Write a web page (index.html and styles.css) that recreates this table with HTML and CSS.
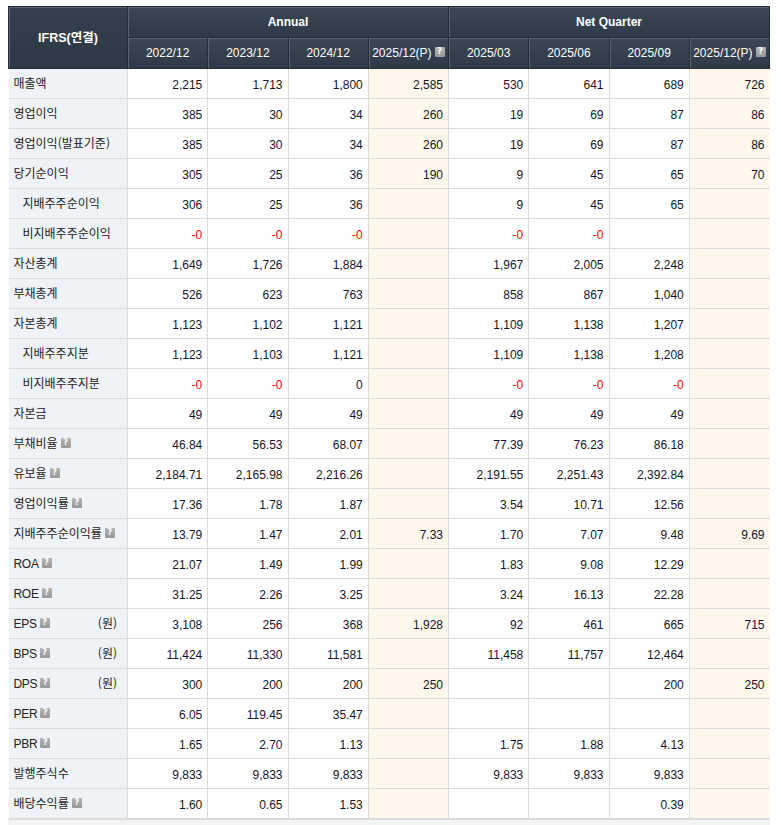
FILE: index.html
```html
<!DOCTYPE html>
<html lang="ko">
<head>
<meta charset="utf-8">
<title>IFRS</title>
<link rel="stylesheet" href="styles.css">
</head>
<body>
<div class="wrap">
<table class="fin">
<colgroup>
<col class="c-label"><col><col><col><col><col><col><col><col>
</colgroup>
<thead>
<tr>
<th rowspan="2" class="h-ifrs">IFRS(연결)</th>
<th colspan="4" class="h-group">Annual</th>
<th colspan="4" class="h-group">Net Quarter</th>
</tr>
<tr>
<th>2022/12</th><th>2023/12</th><th>2024/12</th><th>2025/12(P)<i class="q"></i></th>
<th>2025/03</th><th>2025/06</th><th>2025/09</th><th>2025/12(P)<i class="q"></i></th>
</tr>
</thead>
<tbody>
<tr><th>매출액</th><td>2,215</td><td>1,713</td><td>1,800</td><td class="est">2,585</td><td>530</td><td>641</td><td>689</td><td class="est">726</td></tr>
<tr><th>영업이익</th><td>385</td><td>30</td><td>34</td><td class="est">260</td><td>19</td><td>69</td><td>87</td><td class="est">86</td></tr>
<tr><th>영업이익(발표기준)</th><td>385</td><td>30</td><td>34</td><td class="est">260</td><td>19</td><td>69</td><td>87</td><td class="est">86</td></tr>
<tr><th>당기순이익</th><td>305</td><td>25</td><td>36</td><td class="est">190</td><td>9</td><td>45</td><td>65</td><td class="est">70</td></tr>
<tr><th class="sub">지배주주순이익</th><td>306</td><td>25</td><td>36</td><td class="est"></td><td>9</td><td>45</td><td>65</td><td class="est"></td></tr>
<tr><th class="sub">비지배주주순이익</th><td class="neg">-0</td><td class="neg">-0</td><td class="neg">-0</td><td class="est"></td><td class="neg">-0</td><td class="neg">-0</td><td></td><td class="est"></td></tr>
<tr><th>자산총계</th><td>1,649</td><td>1,726</td><td>1,884</td><td class="est"></td><td>1,967</td><td>2,005</td><td>2,248</td><td class="est"></td></tr>
<tr><th>부채총계</th><td>526</td><td>623</td><td>763</td><td class="est"></td><td>858</td><td>867</td><td>1,040</td><td class="est"></td></tr>
<tr><th>자본총계</th><td>1,123</td><td>1,102</td><td>1,121</td><td class="est"></td><td>1,109</td><td>1,138</td><td>1,207</td><td class="est"></td></tr>
<tr><th class="sub">지배주주지분</th><td>1,123</td><td>1,103</td><td>1,121</td><td class="est"></td><td>1,109</td><td>1,138</td><td>1,208</td><td class="est"></td></tr>
<tr><th class="sub">비지배주주지분</th><td class="neg">-0</td><td class="neg">-0</td><td>0</td><td class="est"></td><td class="neg">-0</td><td class="neg">-0</td><td class="neg">-0</td><td class="est"></td></tr>
<tr><th>자본금</th><td>49</td><td>49</td><td>49</td><td class="est"></td><td>49</td><td>49</td><td>49</td><td class="est"></td></tr>
<tr><th>부채비율<i class="q"></i></th><td>46.84</td><td>56.53</td><td>68.07</td><td class="est"></td><td>77.39</td><td>76.23</td><td>86.18</td><td class="est"></td></tr>
<tr><th>유보율<i class="q"></i></th><td>2,184.71</td><td>2,165.98</td><td>2,216.26</td><td class="est"></td><td>2,191.55</td><td>2,251.43</td><td>2,392.84</td><td class="est"></td></tr>
<tr><th>영업이익률<i class="q"></i></th><td>17.36</td><td>1.78</td><td>1.87</td><td class="est"></td><td>3.54</td><td>10.71</td><td>12.56</td><td class="est"></td></tr>
<tr><th>지배주주순이익률<i class="q"></i></th><td>13.79</td><td>1.47</td><td>2.01</td><td class="est">7.33</td><td>1.70</td><td>7.07</td><td>9.48</td><td class="est">9.69</td></tr>
<tr><th><span class="en">ROA</span><i class="q"></i></th><td>21.07</td><td>1.49</td><td>1.99</td><td class="est"></td><td>1.83</td><td>9.08</td><td>12.29</td><td class="est"></td></tr>
<tr><th><span class="en">ROE</span><i class="q"></i></th><td>31.25</td><td>2.26</td><td>3.25</td><td class="est"></td><td>3.24</td><td>16.13</td><td>22.28</td><td class="est"></td></tr>
<tr><th><span class="en">EPS</span><i class="q"></i><span class="unit">(원)</span></th><td>3,108</td><td>256</td><td>368</td><td class="est">1,928</td><td>92</td><td>461</td><td>665</td><td class="est">715</td></tr>
<tr><th><span class="en">BPS</span><i class="q"></i><span class="unit">(원)</span></th><td>11,424</td><td>11,330</td><td>11,581</td><td class="est"></td><td>11,458</td><td>11,757</td><td>12,464</td><td class="est"></td></tr>
<tr><th><span class="en">DPS</span><i class="q"></i><span class="unit">(원)</span></th><td>300</td><td>200</td><td>200</td><td class="est">250</td><td></td><td></td><td>200</td><td class="est">250</td></tr>
<tr><th><span class="en">PER</span><i class="q"></i></th><td>6.05</td><td>119.45</td><td>35.47</td><td class="est"></td><td></td><td></td><td></td><td class="est"></td></tr>
<tr><th><span class="en">PBR</span><i class="q"></i></th><td>1.65</td><td>2.70</td><td>1.13</td><td class="est"></td><td>1.75</td><td>1.88</td><td>4.13</td><td class="est"></td></tr>
<tr><th>발행주식수</th><td>9,833</td><td>9,833</td><td>9,833</td><td class="est"></td><td>9,833</td><td>9,833</td><td>9,833</td><td class="est"></td></tr>
<tr><th>배당수익률<i class="q"></i></th><td>1.60</td><td>0.65</td><td>1.53</td><td class="est"></td><td></td><td></td><td>0.39</td><td class="est"></td></tr>
</tbody>
</table>
<div class="foot"></div>
</div>
</body>
</html>
```
FILE: styles.css
```css
html, body {
  margin: 0;
  padding: 0;
  background: #fff;
}
.wrap {
  padding: 6px 0 0 8px;
  width: 762px;
}
.fin {
  width: 762px;
  table-layout: fixed;
  border-collapse: collapse;
  font-family: "Liberation Sans", Tahoma, "Noto Sans CJK KR", sans-serif;
  font-size: 12px;
  line-height: 14px;
  color: #222;
}
.fin col.c-label { width: 119px; }
.fin thead th {
  height: 30px;
  padding: 0;
  color: #fff;
  font-weight: normal;
  text-align: center;
  background: linear-gradient(#3b4755, #2e3a47);
  border: 1px solid #232d37;
  box-shadow: inset 1px 1px 0 #59646f;
  white-space: nowrap;
}
.fin thead th.h-ifrs,
.fin thead th.h-group {
  font-weight: bold;
}
.fin thead th.h-ifrs {
  font-size: 12.5px;
  background: linear-gradient(#34404e, #2d3845);
}
.fin tbody th,
.fin tbody td {
  height: 30px;
  box-sizing: border-box;
  border: 1px solid #dcdcdc;
  padding: 0 5px;
  white-space: nowrap;
  overflow: hidden;
}
.fin tbody tr:first-child th,
.fin tbody tr:first-child td { border-top: 0; }
.fin tbody th {
  text-align: left;
  font-weight: normal;
  color: #222;
  background: #eff2f6;
  font-family: "Noto Sans CJK KR", sans-serif;
  font-size: 12px;
  line-height: 14px;
  border-left: 0;
  vertical-align: middle;
  padding-bottom: 1px;
}
.fin tbody th.sub { padding-left: 14px; }
.fin tbody th .en {
  font-family: "Liberation Sans", Tahoma, sans-serif;
  font-size: 12px;
  letter-spacing: -0.3px;
}
.fin tbody th .unit {
  float: right;
  margin-right: 5px;
}
.fin tbody td {
  text-align: right;
  padding-top: 3px;
  color: #15152a;
}
.fin tbody td.est { background: #fef7ec; }
.fin tbody td:last-child { border-right: 0; }
.fin tbody td.neg { color: #f00; }
.q {
  display: inline-block;
  width: 10px;
  height: 10px;
  margin-left: 3px;
  vertical-align: 0;
  background: linear-gradient(#b4b4b4, #989898);
  border-radius: 1px;
  position: relative;
}
.q::after {
  content: "?";
  position: absolute;
  left: 0;
  top: 0;
  width: 10px;
  text-align: center;
  font: bold 8px/10px "DejaVu Sans", sans-serif;
  color: #fff;
  font-style: normal;
}
.foot {
  height: 10px;
  background: #f4f4f4;
  border-top: 1px solid #dcdcdc;
}
```
